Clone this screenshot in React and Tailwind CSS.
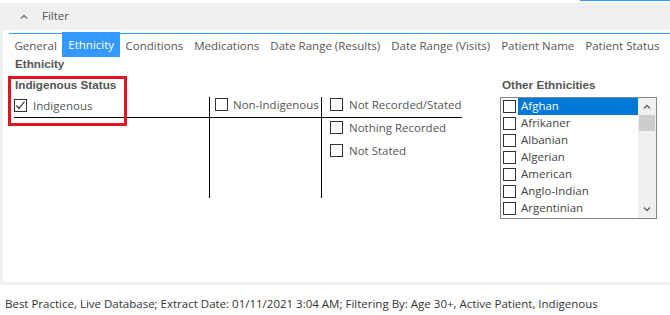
import React from "react";

const Box = ({ checked }) => (
  <div className="w-[13px] h-[13px] border border-[#333333] bg-white shrink-0 flex items-center justify-center">
    {checked && (
      <svg width="11" height="11" viewBox="0 0 11 11">
        <polyline points="1.5,5.5 4,8.5 9.5,1.5" fill="none" stroke="#333" strokeWidth="1.2" />
      </svg>
    )}
  </div>
);

const tabs = ["General", "Ethnicity", "Conditions", "Medications", "Date Range (Results)", "Date Range (Visits)", "Patient Name", "Patient Status"];
const items = ["Afghan", "Afrikaner", "Albanian", "Algerian", "American", "Anglo-Indian", "Argentinian"];

export default function App() {
  return (
    <div className="w-[670px] h-[315px] bg-white flex flex-col font-['Open_Sans',sans-serif] text-[11.5px] text-[#555555] overflow-hidden whitespace-nowrap">
      <div className="h-[3px] flex justify-end">
        <div className="w-[90px] h-[1px] bg-[#3399ff]" />
      </div>
      <div className="h-[282px] flex flex-col border-l-[3px] border-b-[3px] border-[#f0f0f0]">
        <div className="h-[27px] bg-[#f0f0f0] flex items-center pl-[20px] -ml-[3px]">
          <svg width="8" height="5" viewBox="0 0 8 5" className="mr-[14px]">
            <polyline points="1,4.5 4,1.5 7,4.5" fill="none" stroke="#666" strokeWidth="1.2" />
          </svg>
          <span className="leading-[16px] -mt-[1px]">Filter</span>
        </div>
        <div className="flex-1 flex flex-col">
          <div className="mt-[3px] ml-[6px] border-t border-[#3399ff] h-[24px] flex">
            {tabs.map((t) =>
              t === "Ethnicity" ? (
                <div key={t} className="-mt-[2px] h-[25px] px-[6px] bg-[#3399ff] text-white flex items-center leading-[16px]">{t}</div>
              ) : (
                <div key={t} className="h-[23px] px-[5.5px] flex items-center leading-[16px]">{t}</div>
              )
            )}
          </div>
          <div className="pl-[12px] font-['Liberation_Sans',sans-serif] font-bold text-[11.7px] text-[#555555] h-[14px] leading-[14px]">Ethnicity</div>
          <div className="flex pl-[12px] mt-[7px]">
            <div className="relative w-[447px]">
              <div className="absolute left-[-7px] top-[-2px] w-[119px] h-[50px] border-[3px] border-[#e3131f]" />
              <div className="font-['Liberation_Sans',sans-serif] font-bold text-[11.7px] h-[14px] leading-[14px]">Indigenous Status</div>
              <div className="mt-[5px] flex h-[101px]">
                <div className="w-[195px] border-r border-black flex flex-col">
                  <div className="h-[21px] border-b border-black flex items-start pt-[2px] -ml-[1px]">
                    <Box checked />
                    <span className="ml-[6px] leading-[13px]">Indigenous</span>
                  </div>
                </div>
                <div className="w-[112px] border-r border-black flex flex-col">
                  <div className="h-[21px] border-b border-black flex items-start pt-[1px] pl-[5px]">
                    <Box />
                    <span className="ml-[5px] leading-[13px]">Non-Indigenous</span>
                  </div>
                </div>
                <div className="w-[140px] flex flex-col">
                  <div className="h-[21px] border-b border-black flex items-start pt-[1px] pl-[8px]">
                    <Box />
                    <span className="ml-[6px] leading-[13px]">Not Recorded/Stated</span>
                  </div>
                  <div className="flex items-start pt-[3px] pl-[8px]">
                    <Box />
                    <span className="ml-[6px] leading-[13px]">Nothing Recorded</span>
                  </div>
                  <div className="flex items-start pt-[10px] pl-[8px]">
                    <Box />
                    <span className="ml-[6px] leading-[13px]">Not Stated</span>
                  </div>
                </div>
              </div>
            </div>
            <div className="ml-[38px]">
              <div className="pl-[2px] font-['Liberation_Sans',sans-serif] font-bold text-[11.7px] h-[14px] leading-[14px]">Other Ethnicities</div>
              <div className="mt-[5px] w-[157px] h-[122px] border border-[#828790] flex">
                <div className="w-[137px] flex flex-col">
                  {items.map((it, i) => (
                    <div key={it} className="h-[17px] flex items-center pl-[2px]">
                      <Box />
                      <div className={`ml-[2px] flex-1 h-[17px] leading-[16px] pl-[3px] ${i === 0 ? "bg-[#0078d7] text-white" : "text-[#444444]"}`}>{it}</div>
                    </div>
                  ))}
                </div>
                <div className="w-[18px] bg-[#f0f0f0] flex flex-col">
                  <div className="h-[17px] flex items-center justify-center">
                    <svg width="8" height="5" viewBox="0 0 8 5">
                      <polyline points="1,4.5 4,1.5 7,4.5" fill="none" stroke="#606060" strokeWidth="1.3" />
                    </svg>
                  </div>
                  <div className="mx-[1px] h-[16px] bg-[#cdcdcd]" />
                  <div className="flex-1" />
                  <div className="h-[17px] flex items-center justify-center">
                    <svg width="8" height="5" viewBox="0 0 8 5">
                      <polyline points="1,0.5 4,3.5 7,0.5" fill="none" stroke="#606060" strokeWidth="1.3" />
                    </svg>
                  </div>
                </div>
              </div>
            </div>
          </div>
        </div>
      </div>
      <div className="flex-1 flex items-center pl-[5px] pt-[8px] text-[#333333]">
        Best Practice, Live Database; Extract Date: 01/11/2021 3:04 AM; Filtering By: Age 30+, Active Patient, Indigenous
      </div>
    </div>
  );
}
